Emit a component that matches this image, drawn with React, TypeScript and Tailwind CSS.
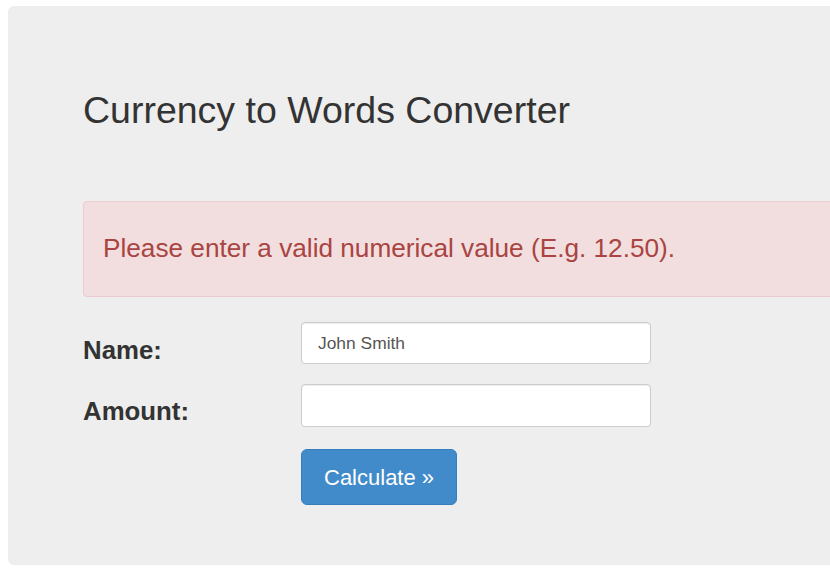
export default function App() {
  return (
    <div className="w-full h-[582px] overflow-hidden bg-white" style={{ fontFamily: '"Liberation Sans", Arial, sans-serif' }}>
      <div className="ml-[8px] mt-[6px] w-[900px] h-[559px] rounded-[6px] bg-[#eeeeee] pl-[75px] pt-[84px]">
        {/* Title */}
        <h1 className="text-[37.5px] leading-[41px] text-[#333333] font-normal">Currency to Words Converter</h1>

        {/* Error */}
        <div className="mt-[70px] h-[96px] flex items-center rounded-[4px] border border-[#ebccd1] bg-[#f2dede] px-[19px]">
          <p className="text-[26.2px] text-[#a94442]">Please enter a valid numerical value (E.g. 12.50).</p>
        </div>

        {/* Form */}
        <form className="mt-[25px] flex flex-col">
          <div className="flex h-[42px]">
            <label className="w-[218px] pt-[13px] text-[25.8px] font-bold text-[#333333] leading-[30px]">Name:</label>
            <input
              defaultValue="John Smith"
              className="w-[350px] h-[42px] rounded-[4px] border border-[#cccccc] bg-white px-[16px] text-[17.4px] text-[#555555] outline-none shadow-[inset_0_1px_1px_rgba(0,0,0,0.075)]"
            />
          </div>
          <div className="flex h-[43px] mt-[20px]">
            <label className="w-[218px] pt-[12px] text-[25.8px] font-bold text-[#333333] leading-[30px]">Amount:</label>
            <input
              className="w-[350px] h-[43px] rounded-[4px] border border-[#cccccc] bg-white px-[16px] text-[17.4px] text-[#555555] outline-none shadow-[inset_0_1px_1px_rgba(0,0,0,0.075)]"
            />
          </div>
          <div className="flex mt-[22px] pl-[218px]">
            <button
              type="button"
              className="h-[56px] px-[22px] rounded-[6px] border border-[#357ebd] bg-[#428bca] text-[22px] text-white"
            >
              Calculate »
            </button>
          </div>
        </form>
      </div>
    </div>
  );
}
